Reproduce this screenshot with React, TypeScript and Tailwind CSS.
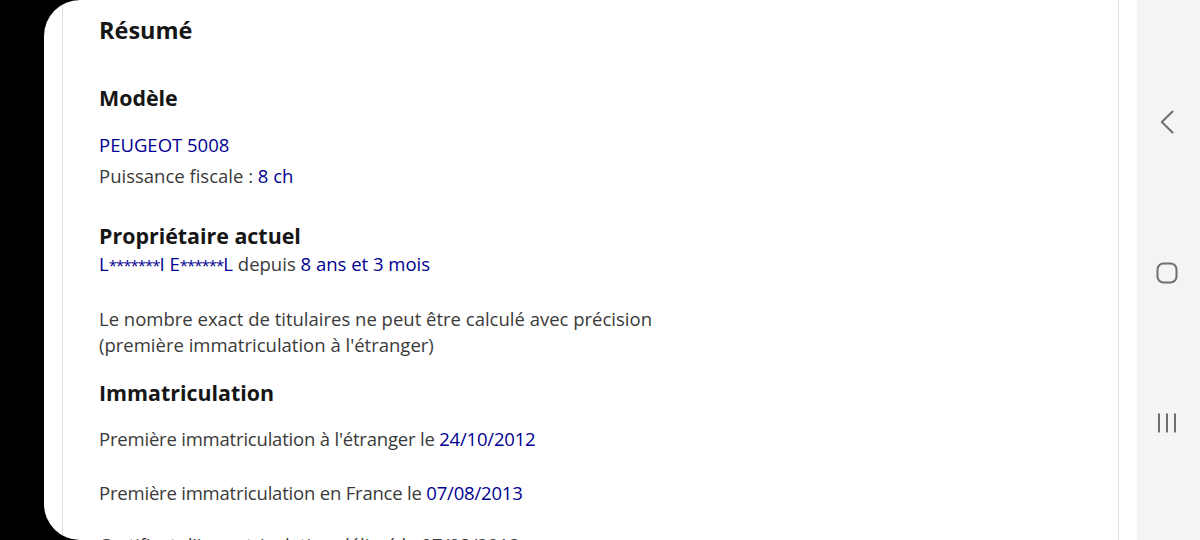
import * as React from "react";

const blue = "text-[#000091]";

const Line = ({ children, className = "" }: { children: React.ReactNode; className?: string }) => (
  <p className={`text-[18.5px] leading-[27px] text-[#3a3a3a] ${className}`}>{children}</p>
);

// masked letters of the owner's name
const Stars = ({ n }: { n: number }) => (
  <span className="text-[15px] tracking-[-1px]">{"*".repeat(n)}</span>
);

const NavBar = () => (
  <div className="flex w-[63px] shrink-0 flex-col items-center bg-[#f4f4f4] pr-[3px] text-[#6e6e6e]">
    <svg className="mt-[110px]" width="14" height="24" viewBox="0 0 14 24" fill="none">
      <polyline points="12.5,1.5 1.8,12 12.5,22.5" stroke="currentColor" strokeWidth="2" strokeLinecap="round" strokeLinejoin="round" />
    </svg>
    <svg className="mt-[128px]" width="22" height="22" viewBox="0 0 22 22" fill="none">
      <rect x="1.5" y="1.5" width="19" height="19" rx="6" stroke="currentColor" strokeWidth="2" />
    </svg>
    <svg className="mt-[128px]" width="22" height="22" viewBox="0 0 22 22" fill="none">
      <line x1="3" y1="1.5" x2="3" y2="20.5" stroke="currentColor" strokeWidth="2" />
      <line x1="11" y1="1.5" x2="11" y2="20.5" stroke="currentColor" strokeWidth="2" />
      <line x1="19" y1="1.5" x2="19" y2="20.5" stroke="currentColor" strokeWidth="2" />
    </svg>
  </div>
);

export default function App() {
  return (
    <div className="flex h-[540px] w-[1200px] overflow-hidden bg-black" style={{ fontFamily: "'Open Sans', 'Noto Sans', sans-serif" }}>
      <div className="w-[44px] shrink-0" />
      <div className="flex flex-1 overflow-hidden rounded-l-[36px] bg-white">
        <div className="ml-[18px] mr-[18px] flex-1 border-x border-[#dddddd] pl-[36px]">
          <h2 className="mt-[14px] text-[23.5px] font-bold leading-[32px] text-[#161616]">Résumé</h2>

          <h3 className="mt-[38px] text-[21.4px] font-bold leading-[28px] text-[#161616]">Modèle</h3>
          <Line className={`mt-[19px] ${blue}`}>PEUGEOT 5008</Line>
          <Line className="mt-[4px]">
            Puissance fiscale : <span className={blue}>8 ch</span>
          </Line>

          <h3 className="mt-[33px] text-[21.4px] font-bold leading-[28px] text-[#161616]">Propriétaire actuel</h3>
          <Line>
            <span className={blue}>
              L<Stars n={7} />I E<Stars n={6} />L
            </span>{" "}
            depuis <span className={blue}>8 ans et 3 mois</span>
          </Line>

          <p className="mt-[27px] text-[18.5px] leading-[26px] text-[#3a3a3a]">
            Le nombre exact de titulaires ne peut être calculé avec précision
            <br />
            (première immatriculation à l'étranger)
          </p>

          <h3 className="mt-[21px] text-[21.4px] font-bold leading-[28px] text-[#161616]">Immatriculation</h3>
          <Line className="mt-[18px] tracking-[-0.2px]">
            Première immatriculation à l'étranger le <span className={blue}>24/10/2012</span>
          </Line>
          <Line className="mt-[27px] tracking-[-0.2px]">
            Première immatriculation en France le <span className={blue}>07/08/2013</span>
          </Line>
          <Line className="mt-[25px]">Certificat d'immatriculation délivré le 07/08/2013</Line>
        </div>
      </div>
      <NavBar />
    </div>
  );
}
